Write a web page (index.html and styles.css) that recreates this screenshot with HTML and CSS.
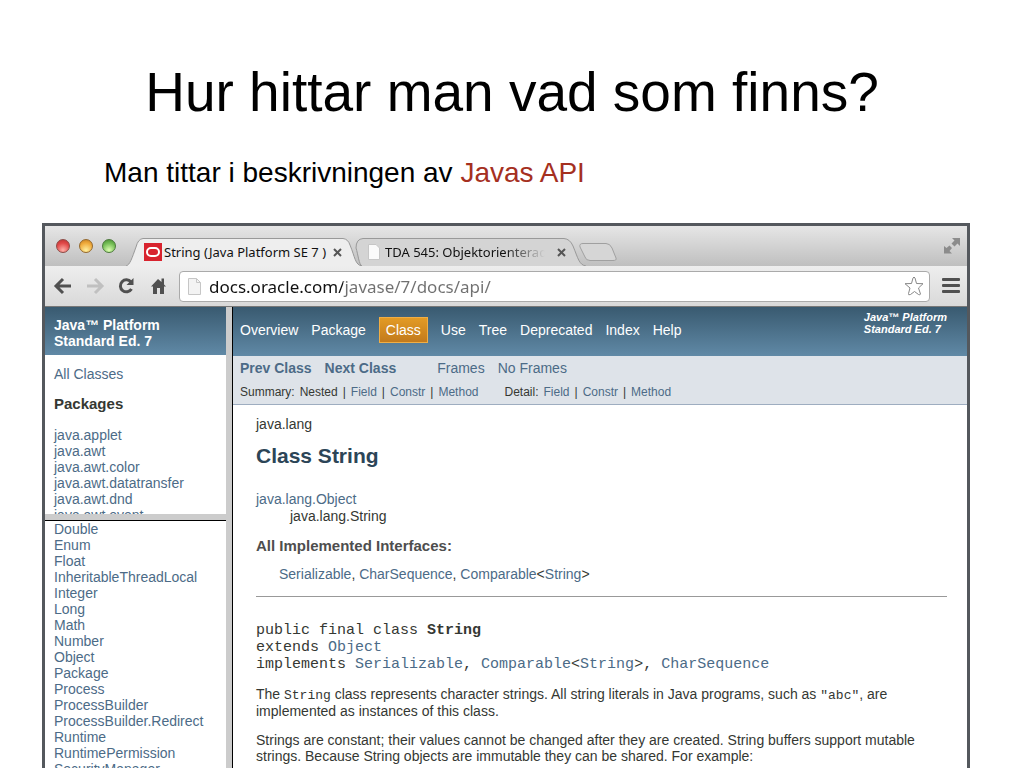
FILE: index.html
```html
<!DOCTYPE html>
<html lang="sv">
<head>
  <meta charset="UTF-8" />
  <meta name="viewport" content="width=device-width, initial-scale=1.0"/>
  <title>Hur hittar man vad som finns?</title>
  <link rel="stylesheet" href="styles.css">
</head>
<body>
  <h1>Hur hittar man vad som finns?</h1>
  <p class="intro">Man tittar i beskrivningen av <span class="accent">Javas API</span></p>

  <div class="browser">
    <div class="tab-bar">
      <div class="lights">
        <button class="light red" aria-label="Close"></button>
        <button class="light yellow" aria-label="Minimize"></button>
        <button class="light green" aria-label="Zoom"></button>
      </div>

      <div class="tabs">
        <div class="tab active">
          <svg class="tab-shape" viewBox="0 0 236 28" preserveAspectRatio="none"><path d="M0 28 C4 27 6 20 10 9 Q12 1 17 .5 H217 Q222 1 224 7 C229 19 229 27 236 28"/></svg>
          <svg class="favicon" width="18" height="18" viewBox="0 0 18 18"><rect width="18" height="18" fill="#d8232e"/><rect x="3" y="5" width="12" height="8" rx="4" fill="none" stroke="#fff" stroke-width="2"/></svg>
          <span class="tab-title">String (Java Platform SE 7 )</span>
          <button class="tab-close" aria-label="Close tab"><svg width="9" height="9" viewBox="0 0 9 9"><path d="M1 1 L8 8 M8 1 L1 8"/></svg></button>
        </div>
        <div class="tab">
          <svg class="tab-shape" viewBox="0 0 236 28" preserveAspectRatio="none"><path d="M12 28 C9 27 8 16 6 10 Q6 1 13 .5 H214 Q220 1 223 8 C228 20 229 27 236 28"/></svg>
          <svg class="favicon" width="12" height="16" viewBox="0 0 12 16"><path d="M.5 .5 H8 L11.5 4 V15.5 H.5 Z" fill="#fafafa" stroke="#c6c6c6"/></svg>
          <span class="tab-title fade">TDA 545: Objektorienterad</span>
          <button class="tab-close" aria-label="Close tab"><svg width="9" height="9" viewBox="0 0 9 9"><path d="M1 1 L8 8 M8 1 L1 8"/></svg></button>
        </div>
        <button class="new-tab" aria-label="New tab">
          <svg width="38" height="20" viewBox="0 0 38 20"><path d="M4 1.500 H27 Q31 1.500 33 6 L37 16 Q38 18.500 34 18.500 H11 Q7 18.500 6 15 L1 5 Q0 1.500 4 1.500 Z" fill="#d6d6d6" stroke="#a0a0a0"/></svg>
        </button>
      </div>

      <button class="expand" aria-label="Full screen">
        <svg width="18" height="18" viewBox="0 0 18 18" fill="#8c8c8c"><path d="M9 1 H17 V9 L14.500 6.500 L11.500 9.500 L8.500 6.500 L11.500 3.500 Z M1 9 L3.500 11 L6.500 8.500 L9 11 L6.500 14 L9 16.500 H1 Z"/></svg>
      </button>
    </div>

    <div class="toolbar">
      <button aria-label="Back"><svg width="20" height="20" viewBox="0 0 20 20" fill="none" stroke="#505050" stroke-width="3"><path d="M18 10 H3 M10 3 L3 10 L10 17"/></svg></button>
      <button aria-label="Forward"><svg width="20" height="20" viewBox="0 0 20 20" fill="none" stroke="#c0c0c0" stroke-width="3"><path d="M2 10 H17 M10 3 L17 10 L10 17"/></svg></button>
      <button aria-label="Reload"><svg width="20" height="20" viewBox="0 0 20 20"><path d="M14 6 A6 6 0 1 0 14.500 13" fill="none" stroke="#505050" stroke-width="3"/><path d="M16.500 2 V9 H9.500 Z" fill="#505050"/></svg></button>
      <button aria-label="Home"><svg width="20" height="20" viewBox="0 0 20 20" fill="#505050"><path d="M9 3 L12.500 6 V2.500 H15 V8.500 L17 10.500 H15 V18 H11 V12 H8 V18 H4 V10.500 H2 Z"/></svg></button>
      <div class="address">
        <svg class="page-icon" width="13" height="17" viewBox="0 0 13 17"><path d="M.5 .5 H8.500 L12.500 4.500 V16.500 H.5 Z" fill="#f3f3f3" stroke="#c6c6c6"/><path d="M8.500 .5 V4.500 H12.500" fill="none" stroke="#c6c6c6"/></svg>
        <input type="text" aria-label="Address" value="docs.oracle.com/javase/7/docs/api/" spellcheck="false">
        <button class="star" aria-label="Bookmark"><svg width="22" height="22" viewBox="0 0 22 22"><path d="M8.500 8.500 L10 3 Q11 1 12 3 L13.500 8.500 L20 8.700 L15.500 13 L17.500 19 Q17 20.500 15.500 19.500 L11.500 16.500 L7.500 19.500 Q5 20.500 5.500 18.500 L7 13 L2 8.700 Z" fill="#fff" stroke="#888" stroke-linejoin="round"/></svg></button>
      </div>
      <button class="menu" aria-label="Menu"><svg width="18" height="16" viewBox="0 0 18 16" fill="#505050"><rect width="18" height="3" y="0" rx="1"/><rect width="18" height="3" y="6" rx="1"/><rect width="18" height="3" y="12" rx="1"/></svg></button>
    </div>

    <div class="frames">
      <div class="left">
        <div class="packages">
          <div class="bar">Java™ Platform<br>Standard Ed. 7</div>
          <a class="all" href="#">All Classes</a>
          <h2>Packages</h2>
          <ul>
            <li><a href="#">java.applet</a></li>
            <li><a href="#">java.awt</a></li>
            <li><a href="#">java.awt.color</a></li>
            <li><a href="#">java.awt.datatransfer</a></li>
            <li><a href="#">java.awt.dnd</a></li>
            <li><a href="#">java.awt.event</a></li>
          </ul>
        </div>
        <ul class="classes">
          <li><a href="#">Double</a></li>
          <li><a href="#">Enum</a></li>
          <li><a href="#">Float</a></li>
          <li><a href="#">InheritableThreadLocal</a></li>
          <li><a href="#">Integer</a></li>
          <li><a href="#">Long</a></li>
          <li><a href="#">Math</a></li>
          <li><a href="#">Number</a></li>
          <li><a href="#">Object</a></li>
          <li><a href="#">Package</a></li>
          <li><a href="#">Process</a></li>
          <li><a href="#">ProcessBuilder</a></li>
          <li><a href="#">ProcessBuilder.Redirect</a></li>
          <li><a href="#">Runtime</a></li>
          <li><a href="#">RuntimePermission</a></li>
          <li><a href="#">SecurityManager</a></li>
        </ul>
      </div>

      <div class="main">
        <div class="top-nav">
          <nav>
            <a href="#">Overview</a>
            <a href="#">Package</a>
            <a class="current" href="#">Class</a>
            <a href="#">Use</a>
            <a href="#">Tree</a>
            <a href="#">Deprecated</a>
            <a href="#">Index</a>
            <a href="#">Help</a>
          </nav>
          <div class="about">Java™ Platform<br>Standard Ed. 7</div>
        </div>

        <div class="sub-nav">
          <div class="row">
            <div class="links"><a href="#"><b>Prev Class</b></a><a href="#"><b>Next Class</b></a></div>
            <div class="links"><a href="#">Frames</a><a href="#">No Frames</a></div>
          </div>
          <div class="row small">
            <div class="parts"><span>Summary:</span><span>Nested</span>|<a href="#">Field</a>|<a href="#">Constr</a>|<a href="#">Method</a></div>
            <div class="parts"><span>Detail:</span><a href="#">Field</a>|<a href="#">Constr</a>|<a href="#">Method</a></div>
          </div>
        </div>

        <div class="content">
          <div>java.lang</div>
          <h2>Class String</h2>
          <ul class="tree">
            <li><a href="#">java.lang.Object</a>
              <ul><li>java.lang.String</li></ul>
            </li>
          </ul>
          <h3>All Implemented Interfaces:</h3>
          <div class="interfaces"><a href="#">Serializable</a>, <a href="#">CharSequence</a>, <a href="#">Comparable</a>&lt;<a href="#">String</a>&gt;</div>
          <hr>
<pre>public final class <b>String</b>
extends <a href="#">Object</a>
implements <a href="#">Serializable</a>, <a href="#">Comparable</a>&lt;<a href="#">String</a>&gt;, <a href="#">CharSequence</a></pre>
          <p>The <code>String</code> class represents character strings. All string literals in Java programs, such as <code>"abc"</code>, are implemented as instances of this class.</p>
          <p>Strings are constant; their values cannot be changed after they are created. String buffers support mutable strings. Because String objects are immutable they can be shared. For example:</p>
        </div>
      </div>
    </div>
  </div>
</body>
</html>
```

FILE: styles.css
```css
* {
  box-sizing: border-box;
}

body {
  margin: 0;
  height: 100vh;
  overflow: hidden;
  display: flex;
  flex-direction: column;
  background: #fff;
  color: #000;
  font-family: "Liberation Sans", Arial, sans-serif;
}

h1 {
  margin: 60px 0 0;
  font-size: 55px;
  line-height: 64px;
  font-weight: normal;
  text-align: center;
}

.intro {
  margin: 33px 104px;
  font-size: 28px;
  line-height: 32px;
}

.accent {
  color: #a5301f;
}

button {
  padding: 0;
  border: none;
  background: none;
  display: flex;
  cursor: pointer;
}

/* browser window */
.browser {
  flex: 1;
  min-height: 0;
  margin: 1px 54px 0 42px;
  border: 3px solid #54585d;
  border-bottom: none;
  display: flex;
  flex-direction: column;
}

.tab-bar {
  height: 40px;
  flex: none;
  display: flex;
  align-items: flex-end;
  background: linear-gradient(#e6e6e6, #bfbfbf);
}

.lights {
  display: flex;
  gap: 9px;
  align-self: center;
  padding: 0 10px 0 11px;
}

.light {
  width: 14px;
  height: 14px;
  border-radius: 50%;
  border: 1px solid #8d4a45;
}

.red { background: radial-gradient(circle at 50% 85%, #ffb0a8, #e04848 60%, #b83030); }
.yellow { background: radial-gradient(circle at 50% 85%, #fff0a0, #f0ab3c 60%, #c47c20); border-color: #94682c; }
.green { background: radial-gradient(circle at 50% 85%, #dcffb0, #74bd55 60%, #468a30); border-color: #4c7a3c; }

.tabs {
  flex: 1;
  display: flex;
  align-items: flex-end;
}

.tab {
  position: relative;
  width: 236px;
  height: 28px;
  display: flex;
  align-items: center;
  padding: 0 20px 0 18px;
  color: #111;
  font: 13px "Noto Sans", sans-serif;
}

.tab + .tab {
  margin-left: -12px;
}

.active {
  z-index: 1;
}

.tab-shape {
  position: absolute;
  inset: 0;
  width: 100%;
  height: 100%;
  fill: #d4d4d4;
  stroke: #999;
}

.active .tab-shape {
  fill: #eee;
}

.favicon,
.tab-title,
.tab-close {
  position: relative;
}

.favicon {
  flex: none;
}

.tab-title {
  flex: 1;
  margin: 0 4px 0 2px;
  overflow: hidden;
  white-space: nowrap;
}

.fade {
  margin: 0 12px 0 5px;
  mask-image: linear-gradient(90deg, #000 75%, transparent);
}

.tab-close svg {
  stroke: #555;
  stroke-width: 2;
}

.new-tab {
  margin: 0 0 4px -7px;
}

.expand {
  align-self: center;
  margin-right: 6px;
}

.toolbar {
  height: 41px;
  flex: none;
  display: flex;
  align-items: center;
  gap: 12px;
  padding: 0 7px 0 8px;
  background: linear-gradient(#eee, #d9d9d9);
  border-bottom: 1px solid #777;
}

.address {
  flex: 1;
  height: 31px;
  display: flex;
  align-items: center;
  margin-left: -2px;
  padding: 0 4px 0 8px;
  background: #fff;
  border: 1px solid #aaa;
  border-radius: 4px;
}

/* host name is dark, the path after it is grey */
.address input {
  flex: 1;
  min-width: 0;
  margin-left: 8px;
  padding: 0;
  border: none;
  outline: none;
  font: 17px "Noto Sans", sans-serif;
  background: linear-gradient(90deg, #111 134px, #707070 134px);
  background-clip: text;
  -webkit-background-clip: text;
  -webkit-text-fill-color: transparent;
}

/* frames */
.frames {
  flex: 1;
  min-height: 0;
  display: flex;
  font-size: 14px;
  line-height: 16px;
  color: #353833;
}

.frames a {
  color: #4c6b87;
  text-decoration: none;
}

.frames ul {
  list-style: none;
  margin: 0;
  padding: 0;
}

.left {
  width: 188px;
  flex: none;
  display: flex;
  flex-direction: column;
  border-right: 1px solid #000;
  box-shadow: inset -6px 0 #ccc;
  padding-right: 6px;
  overflow: hidden;
}

.bar {
  margin: 0 0 11px -9px;
  padding: 10px 9px 6px;
  color: #fff;
  font-weight: bold;
  background: linear-gradient(#395a70, #6089a6);
}

.packages {
  flex: 0 0 207px;
  overflow: hidden;
  padding-left: 9px;
}

.packages h2 {
  margin: 14px 0 15px;
  font-size: 15px;
  line-height: 16px;
}

.all {
  display: block;
}

.frames .classes {
  flex: 1;
  min-height: 0;
  overflow: hidden;
  padding-left: 9px;
  border-top: 1px solid #000;
  box-shadow: 0 -6px #ccc;
  margin-top: 6px;
}

.main {
  flex: 1;
  min-width: 0;
  overflow: hidden;
}

.top-nav {
  height: 49px;
  display: flex;
  justify-content: space-between;
  padding: 0 20px 0 7px;
  background: linear-gradient(#395a70, #6089a6);
}

nav {
  display: flex;
  align-items: center;
  gap: 13px;
  padding-bottom: 3px;
}

.frames nav a {
  color: #fff;
}

.frames nav .current {
  padding: 4px 6px;
  border: 1px solid #f0ae45;
  background: linear-gradient(#e39b25, #c27a1c);
}

.about {
  padding-top: 4px;
  color: #fff;
  font: italic bold 11px/12px "Liberation Sans", Arial, sans-serif;
}

.sub-nav {
  padding: 4px 7px;
  background: #dee3e9;
  border-bottom: 1px solid #9eadc0;
}

.row {
  display: flex;
  gap: 41px;
}

.links {
  display: flex;
  gap: 13px;
}

.small {
  margin-top: 8px;
  gap: 26px;
  font-size: 12px;
}

.parts {
  display: flex;
  gap: 5px;
}

.content {
  padding: 11px 20px 0 23px;
}

.content h2 {
  margin: 12px 0 23px;
  font-size: 21px;
  line-height: 24px;
  color: #2c4557;
}

.tree {
  line-height: 17px;
}

.frames .tree ul {
  padding-left: 34px;
}

.content h3 {
  margin: 13px 0 12px;
  font-size: 15px;
  line-height: 16px;
  color: #4e4e4e;
}

.interfaces {
  padding-left: 23px;
}

hr {
  margin: 14px 0 25px;
  border: none;
  border-top: 1px solid #999;
}

pre {
  margin: 0;
  font: 15px/17px "Liberation Mono", monospace;
}

.content p {
  margin: 13px 0 0;
}

code {
  font: 13px/14px "Liberation Mono", monospace;
}
```
